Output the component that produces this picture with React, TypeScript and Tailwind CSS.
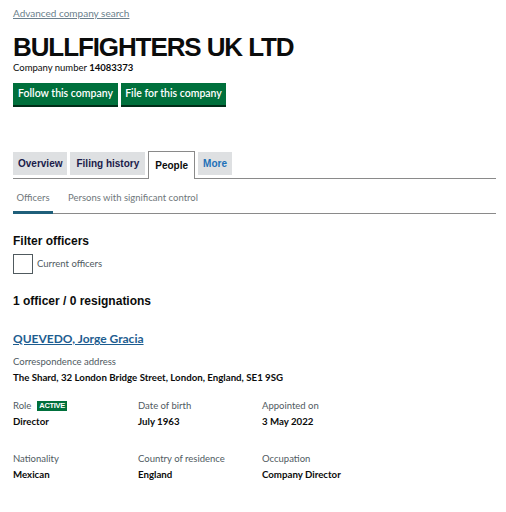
import React from "react";

const body = { fontFamily: "Lato, 'Noto Sans', sans-serif" };
const head = { fontFamily: "'Liberation Sans', Arial, sans-serif" };

function Field({ label, value, badge }: { label: string; value: string; badge?: boolean }) {
  return (
    <div className="flex flex-col">
      <div className="flex items-center gap-[6px] h-[14px] text-[9.5px] text-[#505a5f]">
        <span>{label}</span>
        {badge && (
          <span className="bg-[#00703c] text-white text-[7.5px] font-bold leading-[10px] px-[2px] tracking-[-0.3px]" style={head}>
            ACTIVE
          </span>
        )}
      </div>
      <div className="mt-[1px] text-[9.7px] font-bold text-[#0b0c0c] leading-[14px]">{value}</div>
    </div>
  );
}

export default function App() {
  return (
    <div className="w-[506px] h-[512px] bg-white pl-[13px] pr-[10px] overflow-hidden" style={body}>
      <div className="pt-[7px] text-[10px] leading-[12px]">
        <a className="text-[#6b7f8c] underline">Advanced company search</a>
      </div>
      <h1 className="mt-[14px] text-[26px] leading-[28px] font-bold text-[#0b0c0c] tracking-[-1.1px]" style={head}>
        BULLFIGHTERS UK LTD
      </h1>
      <div className="mt-[1px] text-[9.5px] leading-[12px] text-[#0b0c0c]">
        Company number <span className="font-bold">14083373</span>
      </div>
      <div className="mt-[9px] flex gap-[3px]">
        <button className="h-[22px] w-[105px] bg-[#00703c] text-white text-[10.5px] font-semibold shadow-[0_2px_0_#002d18]">
          Follow this company
        </button>
        <button className="h-[22px] w-[105px] bg-[#00703c] text-white text-[10.5px] font-semibold shadow-[0_2px_0_#002d18]">
          File for this company
        </button>
      </div>

      <div className="mt-[46px] flex items-end gap-[3px] border-b border-[#8a8a8a] h-[28px]">
        <div className="h-[23px] px-[5px] flex items-center bg-[#dee0e2] text-[10px] font-semibold text-[#1b1b4a] mb-[3px]" style={head}>
          Overview
        </div>
        <div className="h-[23px] px-[6px] flex items-center bg-[#dee0e2] text-[10px] font-semibold text-[#1b1b4a] mb-[3px]" style={head}>
          Filing history
        </div>
        <div className="h-[28px] px-[6px] flex items-center bg-white border border-b-0 border-[#8a8a8a] text-[10px] font-semibold text-[#0b0c0c] -mb-px" style={head}>
          People
        </div>
        <div className="h-[23px] px-[5px] flex items-center bg-[#dee0e2] text-[10px] font-semibold text-[#1d70b8] mb-[3px]" style={head}>
          More
        </div>
      </div>

      <div className="mt-[9px] flex border-b border-[#8a8a8a] h-[26px] text-[9.5px] text-[#6f777b]">
        <div className="w-[40px] flex justify-center pt-[3px] border-b-[3px] border-[#1f5f7a] -mb-px">Officers</div>
        <div className="ml-[15px] pt-[3px]">Persons with significant control</div>
      </div>

      <div className="mt-[19px] text-[12px] leading-[16px] font-bold text-[#0b0c0c]" style={head}>
        Filter officers
      </div>
      <div className="mt-[5px] flex items-center gap-[4px]">
        <div className="w-[20px] h-[20px] border border-[#505a5f]" />
        <span className="text-[9.5px] text-[#505a5f]">Current officers</span>
      </div>

      <div className="mt-[19px] text-[12px] leading-[16px] font-bold text-[#0b0c0c]" style={head}>
        1 officer / 0 resignations
      </div>

      <div className="mt-[22px] text-[12px] leading-[16px] font-bold">
        <a className="text-[#1d5d90] underline">QUEVEDO, Jorge Gracia</a>
      </div>

      <div className="mt-[8px] text-[9.5px] leading-[14px] text-[#505a5f]">Correspondence address</div>
      <div className="mt-[1px] text-[9.7px] leading-[14px] font-bold text-[#0b0c0c]">
        The Shard, 32 London Bridge Street, London, England, SE1 9SG
      </div>

      <div className="mt-[15px] grid grid-cols-[125px_124px_1fr]">
        <Field label="Role" value="Director" badge />
        <Field label="Date of birth" value="July 1963" />
        <Field label="Appointed on" value="3 May 2022" />
      </div>
      <div className="mt-[24px] grid grid-cols-[125px_124px_1fr]">
        <Field label="Nationality" value="Mexican" />
        <Field label="Country of residence" value="England" />
        <Field label="Occupation" value="Company Director" />
      </div>
    </div>
  );
}
